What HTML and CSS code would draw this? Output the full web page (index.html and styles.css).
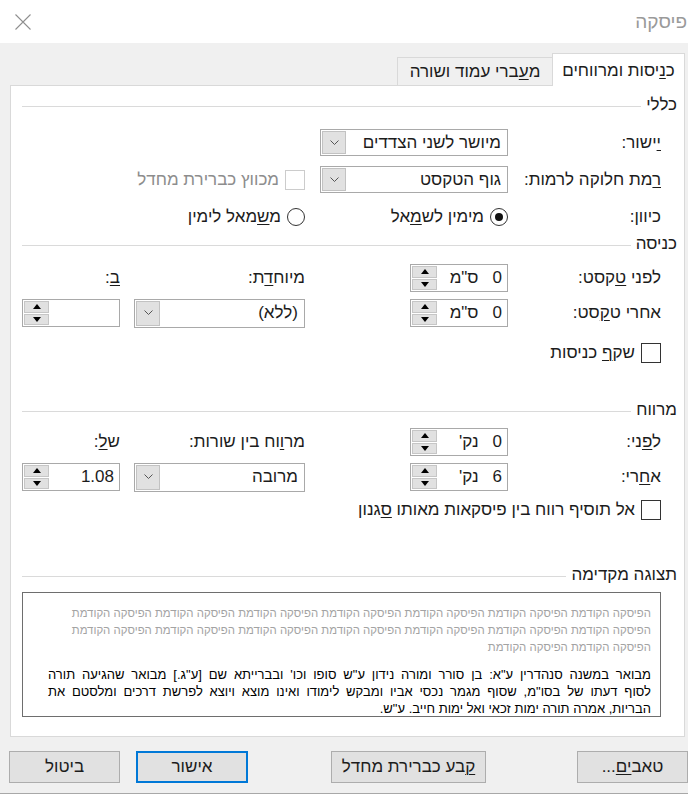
FILE: index.html
```html
<!DOCTYPE html>
<html lang="he" dir="rtl">
<head>
<meta charset="utf-8">
<title>פיסקה</title>
<link rel="stylesheet" href="styles.css">
</head>
<body>
<div class="dialog">
  <div class="titlebar">
    <span class="title">פיסקה</span>
    <svg class="close" width="16" height="16" viewBox="0 0 16 16"><path d="M0.5 0.5 L15.5 15.5 M15.5 0.5 L0.5 15.5" stroke="#8f8f8f" stroke-width="1.1" fill="none"/></svg>
  </div>
  <div class="main">
    <div class="tabs">
      <div class="tab active">כ<u>נ</u>יסות ומרווחים</div>
      <div class="tab">מ<u>ע</u>ברי עמוד ושורה</div>
    </div>
    <div class="panel">
      <div class="group-head"><span>כללי</span><span class="rule"></span></div>
      <div class="grid general">
        <div class="lbl"><u>י</u>ישור:</div>
        <div class="select wide"><span class="val">מיושר לשני הצדדים</span><span class="arrow"><svg width="9" height="6" viewBox="0 0 9 6"><path d="M0.5 0.5 L4.5 4.5 L8.5 0.5" stroke="#555" fill="none"/></svg></span></div>
        <div class="lbl"><u>ר</u>מת חלוקה לרמות:</div>
        <div class="select wide"><span class="val">גוף הטקסט</span><span class="arrow"><svg width="9" height="6" viewBox="0 0 9 6"><path d="M0.5 0.5 L4.5 4.5 L8.5 0.5" stroke="#555" fill="none"/></svg></span></div>
        <div class="check disabled c4"><span class="box"></span><span>מכווץ כברירת מחדל</span></div>
        <div class="lbl">כיוון:</div>
        <div class="radio c2"><span class="circle on"></span><span>מימין לש<u>מ</u>אל</span></div>
        <div class="radio c4"><span class="circle"></span><span>מ<u>ש</u>מאל לימין</span></div>
      </div>

      <div class="group-head indent-head"><span>כניסה</span><span class="rule"></span></div>
      <div class="grid indent">
        <div class="lbl">לפני <u>ט</u>קסט:</div>
        <div class="spin"><span class="val">0<span class="unit">ס"מ</span></span><span class="btns"><span class="up"></span><span class="down"></span></span></div>
        <div class="lbl c4">מיוח<u>ד</u>ת:</div>
        <div class="lbl c6"><u>ב</u>:</div>
        <div class="lbl">אחרי ט<u>ק</u>סט:</div>
        <div class="spin"><span class="val">0<span class="unit">ס"מ</span></span><span class="btns"><span class="up"></span><span class="down"></span></span></div>
        <div class="select mid c4"><span class="val">(ללא)</span><span class="arrow"><svg width="9" height="6" viewBox="0 0 9 6"><path d="M0.5 0.5 L4.5 4.5 L8.5 0.5" stroke="#555" fill="none"/></svg></span></div>
        <div class="spin c6"><span class="val"></span><span class="btns"><span class="up"></span><span class="down"></span></span></div>
        <div class="check full"><span class="box"></span><span>שק<u>ף</u> כניסות</span></div>
      </div>

      <div class="group-head space-head"><span>מרווח</span><span class="rule"></span></div>
      <div class="grid spacing">
        <div class="lbl">ל<u>פ</u>ני:</div>
        <div class="spin"><span class="val">0<span class="unit">נק'</span></span><span class="btns"><span class="up"></span><span class="down"></span></span></div>
        <div class="lbl c4">מר<u>ו</u>וח בין שורות:</div>
        <div class="lbl c6">ש<u>ל</u>:</div>
        <div class="lbl">א<u>ח</u>רי:</div>
        <div class="spin"><span class="val">6<span class="unit">נק'</span></span><span class="btns"><span class="up"></span><span class="down"></span></span></div>
        <div class="select mid c4"><span class="val">מרובה</span><span class="arrow"><svg width="9" height="6" viewBox="0 0 9 6"><path d="M0.5 0.5 L4.5 4.5 L8.5 0.5" stroke="#555" fill="none"/></svg></span></div>
        <div class="spin c6"><span class="val">1.08</span><span class="btns"><span class="up"></span><span class="down"></span></span></div>
        <div class="check full"><span class="box"></span><span>אל תוסיף רווח בין פיסקאות מאותו <u>ס</u>גנון</span></div>
      </div>

      <div class="group-head preview-head"><span>תצוגה מקדימה</span><span class="rule"></span></div>
      <div class="preview">
        <div class="prev">
          <div>הפיסקה הקודמת הפיסקה הקודמת הפיסקה הקודמת הפיסקה הקודמת הפיסקה הקודמת הפיסקה הקודמת הפיסקה הקודמת</div>
          <div>הפיסקה הקודמת הפיסקה הקודמת הפיסקה הקודמת הפיסקה הקודמת הפיסקה הקודמת הפיסקה הקודמת הפיסקה הקודמת</div>
          <div>הפיסקה הקודמת הפיסקה הקודמת</div>
        </div>
        <div class="cur">
          <div class="jl">מבואר במשנה סנהדרין ע"א: בן סורר ומורה נידון ע"ש סופו וכו' ובברייתא שם [ע"ג.] מבואר שהגיעה תורה</div>
          <div class="jl">לסוף דעתו של בסו"מ, שסוף מגמר נכסי אביו ומבקש לימודו ואינו מוצא ויוצא לפרשת דרכים ומלסטם את</div>
          <div>הבריות, אמרה תורה ימות זכאי ואל ימות חייב. ע"ש.</div>
        </div>
      </div>
    </div>
    <div class="buttons">
      <div class="btn tabsbtn">טאב<u>ים</u>...</div>
      <div class="btn defbtn"><u>ק</u>בע כברירת מחדל</div>
      <div class="btn okbtn">אישור</div>
      <div class="btn cancelbtn">ביטול</div>
    </div>
  </div>
</div>
</body>
</html>
```

FILE: styles.css
```css
* { box-sizing: border-box; }
html, body { margin: 0; padding: 0; }
body {
  width: 688px;
  height: 795px;
  overflow: hidden;
  background: #fff;
  font-family: "Liberation Sans", "DejaVu Sans", sans-serif;
  font-size: 17px;
  line-height: 20px;
  color: #1c1c1c;
  direction: rtl;
}
u { text-underline-offset: 2px; text-decoration-thickness: 1px; }

.dialog { width: 688px; height: 795px; display: flex; flex-direction: column; }

.titlebar {
  height: 43px;
  flex: none;
  background: #fff;
  display: flex;
  justify-content: space-between;
  align-items: center;
  padding-left: 15px;
  padding-right: 1px;
}
.title { font-size: 19px; color: #9a9a9a; }
.close { display: block; }

.main {
  height: 751px;
  flex: none;
  background: #f0f0f0;
  padding-top: 10px;
  border-bottom: 1px solid #a8a8a8;
}

.tabs {
  display: flex;
  height: 33px;
  margin: 0 3px 0 10px;
  border-bottom: 1px solid #d9d9d9;
}
.tab {
  display: flex;
  align-items: center;
  justify-content: center;
  white-space: nowrap;
}
.tab.active {
  align-self: flex-start;
  width: 133px;
  height: 33px;
  padding-top: 2px;
  background: #fff;
  border: 1px solid #d9d9d9;
  border-bottom: none;
}
.tab:not(.active) {
  align-self: flex-end;
  width: 155px;
  height: 28px;
  border: 1px solid #d9d9d9;
  border-right: none;
  border-bottom: none;
  background: #f0f0f0;
}

.panel {
  margin: 0 3px 0 10px;
  height: 651px;
  background: #fff;
  border: 1px solid #d9d9d9;
  border-top: none;
  padding: 9px 7px 0 11px;
}

.group-head {
  display: flex;
  align-items: center;
  height: 20px;
  gap: 5px;
  white-space: nowrap;
}
.group-head .rule { flex: 1; height: 1px; background: #dadada; margin-top: 2px; }
.indent-head { margin-top: 4px; }
.space-head { margin-top: 37px; }
.preview-head { margin-top: 45px; }

.grid {
  display: grid;
  grid-template-columns: 153px 98px 105px 171px 14px 98px;
  margin-right: 16px;
  align-items: center;
  justify-items: start;
}
.general { grid-template-rows: 27px 27px 27px; row-gap: 10px; margin-top: 14px; }
.indent { grid-template-rows: 28px 28px 29px; row-gap: 7px; margin-top: 10px; }
.spacing { grid-template-rows: 28px 28px 22px; row-gap: 7px; margin-top: 8px; }

.lbl { grid-column: 1; white-space: nowrap; }
.lbl.c4 { grid-column: 4 / 6; }
.lbl.c6 { grid-column: 6; }
.c2 { grid-column: 2 / 4; }
.c4 { grid-column: 4 / 7; }
.c6 { grid-column: 6; }
.select.c4 { grid-column: 4; }

.select {
  display: flex;
  align-items: stretch;
  background: #fff;
  border: 1px solid #a9a9a9;
  height: 100%;
}
.select.wide { grid-column: 2 / 4; width: 188px; height: 27px; }
.select.mid { width: 171px; height: 29px; }
.select .val { flex: 1; padding-right: 6px; display: flex; align-items: center; white-space: nowrap; }
.select .arrow {
  width: 24px;
  margin: 1px;
  background: #e1e1e1;
  border: 1px solid #c2c2c2;
  display: flex;
  align-items: center;
  justify-content: center;
}
.select .arrow svg { display: block; }

.spin {
  grid-column: 2;
  width: 98px;
  height: 28px;
  display: flex;
  background: #fff;
  border: 1px solid #a9a9a9;
}
.spin.c6 { grid-column: 6; }
.spin .val { flex: 1; padding-right: 5px; display: flex; align-items: center; white-space: nowrap; }
.spin .unit { margin-right: 14px; }
.spin .btns {
  width: 25px;
  margin: 1px;
  display: flex;
  flex-direction: column;
  gap: 1px;
}
.spin .up, .spin .down {
  flex: 1;
  background: #e1e1e1;
  border: 1px solid #c6c6c6;
  display: flex;
  align-items: center;
  justify-content: center;
}
.spin .up::before {
  content: "";
  border-left: 4px solid transparent;
  border-right: 4px solid transparent;
  border-bottom: 5px solid #000;
}
.spin .down::before {
  content: "";
  border-left: 4px solid transparent;
  border-right: 4px solid transparent;
  border-top: 5px solid #000;
}

.check, .radio { display: flex; align-items: center; gap: 6px; white-space: nowrap; }
.check.full { grid-column: 1 / -1; align-self: end; }
.check .box { width: 20px; height: 20px; border: 1px solid #333; background: #fff; flex: none; }
.check.disabled { color: #8d8d8d; }
.check.disabled .box { border-color: #cccccc; }
.radio .circle {
  width: 18px;
  height: 18px;
  flex: none;
  border: 1px solid #333;
  border-radius: 50%;
  display: flex;
  align-items: center;
  justify-content: center;
}
.radio .circle.on::before {
  content: "";
  width: 8px;
  height: 8px;
  border-radius: 50%;
  background: #111;
}

.preview {
  margin: 7px 16px 0 0;
  height: 125px;
  border: 1px solid #6e6e6e;
  padding: 12px 9px 0 25px;
  font-size: 11.4px;
  line-height: 17px;
  white-space: nowrap;
}
.prev { color: #a3a3a3; }
.cur { margin-top: 10px; color: #000; font-size: 13px; }
.cur .jl { text-align: justify; text-align-last: justify; }

.buttons { display: flex; margin-top: 14px; padding-left: 9px; }
.btn {
  height: 32px;
  background: #e1e1e1;
  border: 1px solid #adadad;
  display: flex;
  align-items: center;
  justify-content: center;
  white-space: nowrap;
}
.tabsbtn { width: 111px; }
.defbtn { width: 155px; margin-right: 91px; }
.okbtn { width: 112px; margin-right: auto; border: 2px solid #0078d7; }
.cancelbtn { width: 111px; margin-right: 16px; }
```
